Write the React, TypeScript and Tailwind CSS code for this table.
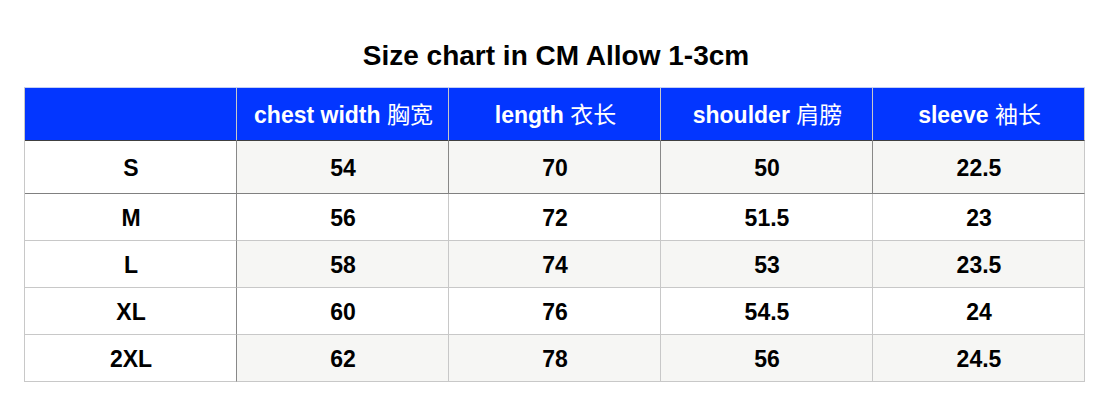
const heads = [
  { en: "chest width", zh: "胸宽" },
  { en: "length", zh: "衣长" },
  { en: "shoulder", zh: "肩膀" },
  { en: "sleeve", zh: "袖长" },
];

const rows = [
  ["S", "54", "70", "50", "22.5"],
  ["M", "56", "72", "51.5", "23"],
  ["L", "58", "74", "53", "23.5"],
  ["XL", "60", "76", "54.5", "24"],
  ["2XL", "62", "78", "56", "24.5"],
];

const App = () => {
  return (
    <div className="w-[1112px] h-[412px] bg-white font-['Liberation_Sans','Noto_Sans_CJK_SC',sans-serif] text-black">
      <h1 className="pt-[42px] text-center text-[28px] leading-none font-bold">
        Size chart in CM Allow 1-3cm
      </h1>
      <div className="ml-[24px] mt-[17px] grid w-[1061px] grid-cols-[repeat(5,212px)] border-l border-t border-l-[#c8c8c8] border-t-[#c4d0f4]">
        <div className="h-[53px] border-b border-r border-b-[#404040] border-r-[#c8c8c8] bg-[#0336ff]" />
        {heads.map((h) => (
          <div
            key={h.en}
            className="flex h-[53px] items-center justify-center whitespace-nowrap border-b border-r border-b-[#404040] border-r-[#c8c8c8] bg-[#0336ff] pt-[2px] pl-[2px] text-[23px] font-bold text-white"
          >
            {h.en}&nbsp;<span className="font-normal">{h.zh}</span>
          </div>
        ))}
        {rows.map((r, ri) =>
          r.map((v, ci) => {
            const first = ri === 0;
            const gray = ci > 0 && ri % 2 === 0;
            const bottom = first ? "border-b-[#808080]" : "border-b-[#c8c8c8]";
            const right = ci === 0 || (first && ci < 4) ? "border-r-[#888888]" : "border-r-[#c8c8c8]";
            return (
              <div
                key={ri + "-" + ci}
                className={`flex items-center justify-center border-b border-r pt-[2px] pl-[1px] text-[23px] font-bold ${
                  first ? "h-[53px]" : "h-[47px]"
                } ${bottom} ${right} ${gray ? "bg-[#f6f6f4]" : "bg-white"}`}
              >
                {v}
              </div>
            );
          })
        )}
      </div>
    </div>
  );
};

export default App;
